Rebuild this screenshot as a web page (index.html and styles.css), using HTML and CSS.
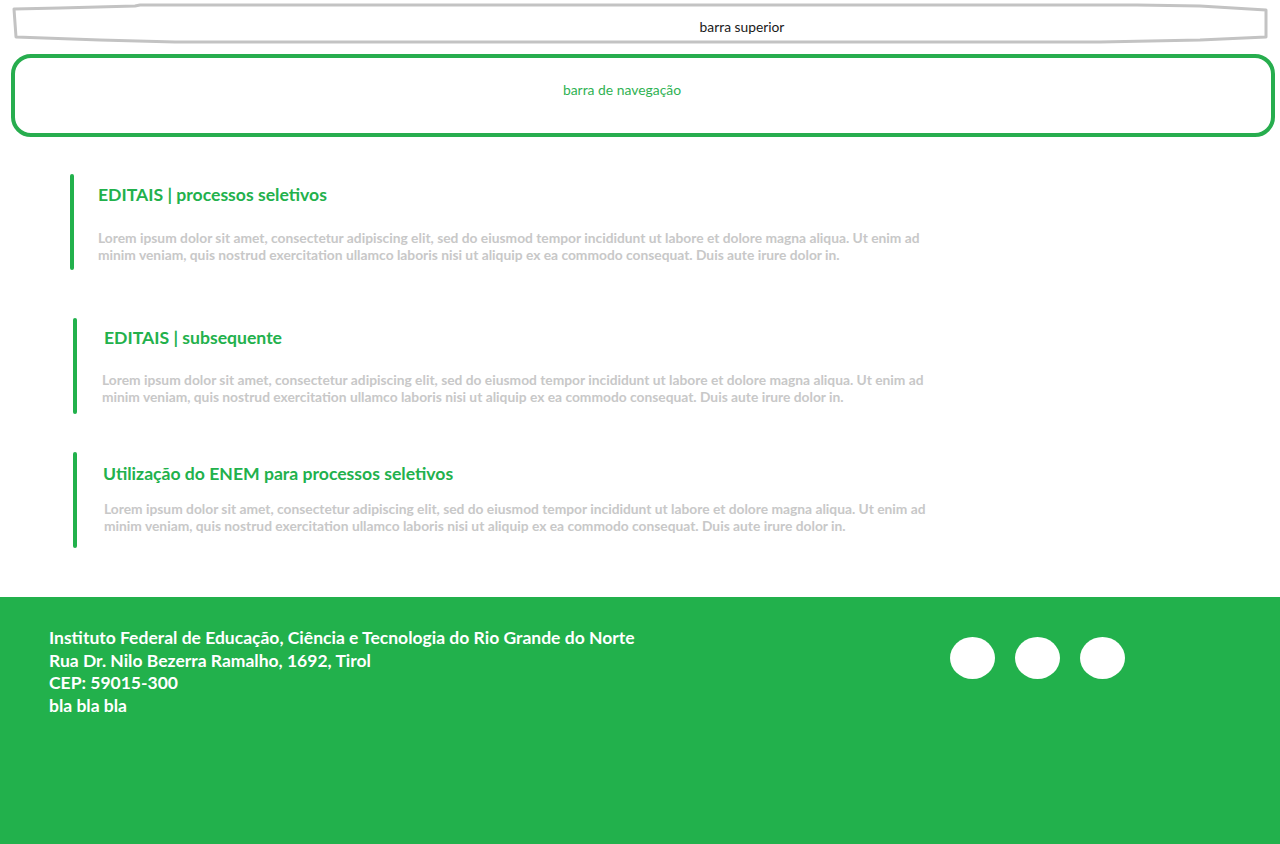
FILE: index.html
```html
<!DOCTYPE html>
<html lang="pt-BR">
<head>
<meta charset="utf-8">
<title>IFRN - Editais</title>
<link rel="stylesheet" href="styles.css">
</head>
<body>
<header class="top-bar">
  <svg class="top-bar__outline" width="1256" height="41" viewBox="0 0 1256 41" aria-hidden="true">
    <polygon points="2,6 48,5 123,3 128,2 1125,2 1188,3 1254,7 1254,34 1188,37 1088,39 163,39 88,37 4,34" />
  </svg>
  <span class="top-bar__label">barra superior</span>
</header>
<nav class="nav-bar">
  <span class="nav-bar__label">barra de navegação</span>
</nav>
<main class="content">
  <section class="notice notice--first">
    <div class="notice__bar"></div>
    <div class="notice__body">
      <h2 class="notice__title">EDITAIS | processos seletivos</h2>
      <p class="notice__text">Lorem ipsum dolor sit amet, consectetur adipiscing elit, sed do eiusmod tempor incididunt ut labore et dolore magna aliqua. Ut enim ad<br>minim veniam, quis nostrud exercitation ullamco laboris nisi ut aliquip ex ea commodo consequat. Duis aute irure dolor in.</p>
    </div>
  </section>
  <section class="notice notice--second">
    <div class="notice__bar"></div>
    <div class="notice__body">
      <h2 class="notice__title">EDITAIS | subsequente</h2>
      <p class="notice__text">Lorem ipsum dolor sit amet, consectetur adipiscing elit, sed do eiusmod tempor incididunt ut labore et dolore magna aliqua. Ut enim ad<br>minim veniam, quis nostrud exercitation ullamco laboris nisi ut aliquip ex ea commodo consequat. Duis aute irure dolor in.</p>
    </div>
  </section>
  <section class="notice notice--third">
    <div class="notice__bar"></div>
    <div class="notice__body">
      <h2 class="notice__title">Utilização do ENEM para processos seletivos</h2>
      <p class="notice__text">Lorem ipsum dolor sit amet, consectetur adipiscing elit, sed do eiusmod tempor incididunt ut labore et dolore magna aliqua. Ut enim ad<br>minim veniam, quis nostrud exercitation ullamco laboris nisi ut aliquip ex ea commodo consequat. Duis aute irure dolor in.</p>
    </div>
  </section>
</main>
<footer class="footer">
  <address class="footer__address">
    Instituto Federal de Educação, Ciência e Tecnologia do Rio Grande do Norte<br>
    Rua Dr. Nilo Bezerra Ramalho, 1692, Tirol<br>
    CEP: 59015-300<br>
    bla bla bla
  </address>
  <div class="footer__social">
    <span class="footer__dot"></span>
    <span class="footer__dot"></span>
    <span class="footer__dot"></span>
  </div>
</footer>
</body>
</html>
```
FILE: styles.css
```css
* { box-sizing: border-box; }

html, body {
  margin: 0;
  padding: 0;
  background: #ffffff;
}

body {
  font-family: Lato, "Open Sans", "Liberation Sans", sans-serif;
  width: 1280px;
  min-height: 844px;
  display: flex;
  flex-direction: column;
}

/* top bar */
.top-bar {
  position: relative;
  margin: 3px 0 0 12px;
  width: 1256px;
  height: 41px;
  display: flex;
  align-items: center;
  justify-content: center;
  padding-left: 204px;
  padding-top: 5px;
}

.top-bar__outline {
  position: absolute;
  left: 0;
  top: 0;
}

.top-bar__outline polygon {
  fill: none;
  stroke: #c3c3c3;
  stroke-width: 3;
  stroke-linejoin: round;
}

.top-bar__label {
  position: relative;
  font-size: 13.8px;
  color: #1a1a1a;
}

/* nav bar */
.nav-bar {
  margin: 10px 0 0 11px;
  width: 1264px;
  height: 83px;
  border: 4px solid #27ad4e;
  border-radius: 20px;
  display: flex;
  justify-content: center;
  padding: 24px 42px 0 0;
}

.nav-bar__label {
  font-size: 13.9px;
  color: #2fb253;
  line-height: 16px;
}

/* content */
.content {
  display: flex;
  flex-direction: column;
  padding-top: 37px;
  flex: 1;
}

.notice {
  display: flex;
  align-items: stretch;
}

.notice__bar {
  width: 4px;
  border-radius: 2px;
  background: #22b14c;
  flex: none;
}

.notice__body {
  padding-top: 10px;
  height: 96px;
}

.notice__title {
  margin: 0;
  font-size: 17.6px;
  line-height: 22px;
  font-weight: 700;
  color: #22b14c;
}

.notice__text {
  margin: 23px 0 0;
  font-size: 13.8px;
  line-height: 17px;
  font-weight: 700;
  color: #c8c8c8;
  white-space: nowrap;
}

.notice--first { margin-left: 70px; }
.notice--first .notice__body { padding-left: 24px; }

.notice--second { margin: 48px 0 0 73px; }
.notice--second .notice__body { padding-left: 27px; padding-top: 9px; }
.notice--second .notice__text { margin: 22px 0 0 -2px; }

.notice--third { margin: 38px 0 0 73px; }
.notice--third .notice__body { padding-left: 26px; padding-top: 11px; }
.notice--third .notice__text { margin: 15px 0 0 1px; }

/* footer */
.footer {
  margin-top: 49px;
  height: 247px;
  background: #22b14c;
  display: flex;
  justify-content: space-between;
  align-items: flex-start;
  padding: 30px 155px 0 49px;
}

.footer__address {
  font-style: normal;
  font-size: 17.5px;
  line-height: 22.7px;
  font-weight: 700;
  color: #ffffff;
}

.footer__social {
  display: flex;
  gap: 20px;
  margin-top: 10px;
}

.footer__dot {
  width: 45px;
  height: 42px;
  border-radius: 50%;
  background: #ffffff;
}
```
